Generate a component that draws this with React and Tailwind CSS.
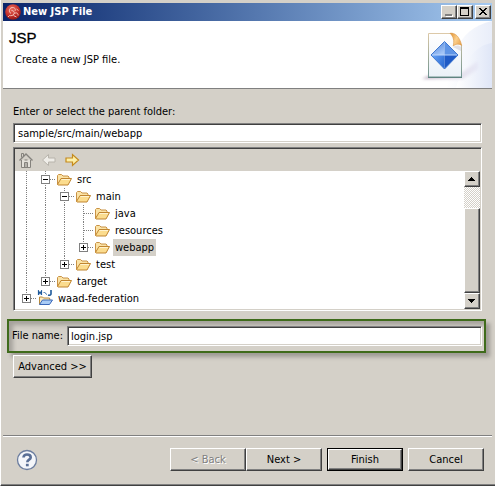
import React from "react";

const RAISED =
  "border border-t-white border-l-white border-r-[#404040] border-b-[#404040] bg-[#d4d0c8] shadow-[inset_-1px_-1px_#808080]";
const SUNKEN =
  "border border-t-[#808080] border-l-[#808080] border-r-white border-b-white shadow-[inset_1px_1px_#404040,inset_-1px_-1px_#d4d0c8]";

/* ---------- title bar ---------- */

function AppIcon() {
  return (
    <svg width="16" height="16" viewBox="0 0 16 16" aria-hidden="true">
      <defs>
        <radialGradient id="ball" cx="0.4" cy="0.3" r="0.75">
          <stop offset="0" stopColor="#ea6a5c" />
          <stop offset="0.6" stopColor="#c4302a" />
          <stop offset="1" stopColor="#8a1212" />
        </radialGradient>
      </defs>
      <circle cx="8" cy="8" r="7.8" fill="url(#ball)" />
      <g fill="none" stroke="#f6cfc6" strokeWidth="0.900">
        <path d="M6 9.500C3.500 8 4 4 7 3.500c2.500-.3 4 1.500 3 3.500" />
        <path d="M6.500 6.500c2 0 3.500 1.500 2.500 3.500-.8 1.500-3 2-4.500 1.500L3 13" />
        <path d="M9.500 9.500c2-1.500 4 0 3.500 2M8.500 11.500l3 1.500M11.500 5l2 1.500" />
      </g>
    </svg>
  );
}

function TitleButton({ label, disabled, children }) {
  return (
    <button
      type="button"
      aria-label={label}
      disabled={disabled}
      className={`flex h-[14px] w-4 items-center justify-center ${RAISED}`}
    >
      <svg width="12" height="10" viewBox="0 0 12 10" shapeRendering="crispEdges" aria-hidden="true">
        {children}
      </svg>
    </button>
  );
}

function TitleBar() {
  return (
    <div className="flex h-[18px] items-center bg-linear-to-r from-[#0a246a] to-[#a6caf0] pr-px pl-[2px]">
      <AppIcon />
      <span className="flex-1 pl-[2px] text-[11px] leading-4 font-bold text-white">New JSP File</span>
      <TitleButton label="Minimize" disabled>
        <path d="M3 8h7v2H3z" fill="#fff" />
        <path d="M2 7h7v2H2z" fill="#808080" />
      </TitleButton>
      <TitleButton label="Maximize">
        <path d="M1 0h9v9H1zM2 2v6h7V2z" fill="#000" fillRule="evenodd" />
      </TitleButton>
      <div className="w-[2px]" />
      <TitleButton label="Close">
        <path
          d="M2 1h2v1h1v1h2V2h1V1h2v1H9v1H8v1H7v1h1v1h1v1h1v1H8V7H7V6H5v1H4v1H2V7h1V6h1V5h1V4H4V3H3V2H2z"
          fill="#000"
        />
      </TitleButton>
    </div>
  );
}

/* ---------- banner ---------- */

function BannerArt() {
  return (
    <svg width="80" height="67" viewBox="0 0 80 67" aria-hidden="true">
      <defs>
        <linearGradient id="sweep" x1="0" y1="0" x2="1" y2="0">
          <stop offset="0" stopColor="#ffffff" />
          <stop offset="1" stopColor="#dfe6f7" />
        </linearGradient>
        <linearGradient id="page" x1="0" y1="0" x2="0" y2="1">
          <stop offset="0" stopColor="#ffffff" />
          <stop offset="1" stopColor="#eaf1f7" />
        </linearGradient>
        <linearGradient id="pageEdge" x1="0" y1="0" x2="0" y2="1">
          <stop offset="0" stopColor="#dcc9a8" />
          <stop offset="1" stopColor="#6f938f" />
        </linearGradient>
        <linearGradient id="fold" x1="0" y1="0.2" x2="1" y2="0.8">
          <stop offset="0" stopColor="#e59a3c" />
          <stop offset="0.5" stopColor="#fbcf8c" />
          <stop offset="1" stopColor="#e9a24a" />
        </linearGradient>
        <linearGradient id="gemTop" x1="0" y1="0" x2="0.6" y2="1">
          <stop offset="0" stopColor="#3f78d6" />
          <stop offset="1" stopColor="#a3c5f6" />
        </linearGradient>
        <linearGradient id="gemBottom" x1="0" y1="0" x2="1" y2="0.6">
          <stop offset="0" stopColor="#6ba6f6" />
          <stop offset="1" stopColor="#2f6fd6" />
        </linearGradient>
        <linearGradient id="shade" x1="0" y1="0" x2="1" y2="0">
          <stop offset="0" stopColor="#a894ac" stopOpacity="0.8" />
          <stop offset="1" stopColor="#d8d3ea" stopOpacity="0.3" />
        </linearGradient>
        <filter id="soft" x="-20%" y="-20%" width="140%" height="140%">
          <feGaussianBlur stdDeviation="1.800" />
        </filter>
      </defs>
      <path d="M80 0C62 4 50 14 44 30L34 67h46z" fill="url(#sweep)" opacity="0.700" />
      <path d="M80 22C66 24 54 34 44 67h36z" fill="url(#sweep)" />
      <path d="M10 58l6-3 33-3 17-12v8L51 58z" fill="url(#shade)" filter="url(#soft)" />
      <path d="M16.500 12.500h24l9 12v31.500h-33z" fill="url(#page)" stroke="url(#pageEdge)" />
      <path d="M16 56.500h34" stroke="#5f8480" />
      <path d="M38 12.300c5-.8 9.500 3 11.700 12.200-2.500-1.800-5.500-1.800-8.500.5 1.300-5 .3-9.500-3.200-12.700z" fill="url(#fold)" stroke="#d99443" strokeWidth="0.600" />
      <path d="M41 26c3-2 6-2 8 0v4z" fill="#c9c6cf" opacity="0.500" />
      <path d="M32.500 20.500V34H19z" fill="url(#gemTop)" />
      <path d="M32.500 20.500V34H46z" fill="#5f95e6" />
      <path d="M19 34h13.500v14z" fill="url(#gemBottom)" />
      <path d="M32.500 34H46L32.500 48z" fill="#1f5bc6" />
      <path d="M32.500 20.500L46 34 32.500 48 19 34z" fill="none" stroke="#3f78d0" />
      <path d="M20 34h25" stroke="#bcd6fc" />
    </svg>
  );
}

/* ---------- tree ---------- */

function Branch({ kind }) {
  const down = kind === "line" || kind === "tee" || kind === "minus";
  const box = kind === "plus" || kind === "minus";
  return (
    <svg width="19" height="17" viewBox="0 0 19 17" shapeRendering="crispEdges" className="shrink-0" aria-hidden="true">
      <g stroke="#808080" strokeDasharray="1 1">
        <path d="M9.500 0V9" />
        {down && <path d="M9.500 8V17" />}
        {kind !== "line" && <path d="M10 8.500H19" />}
      </g>
      {box && (
        <>
          <path d="M5.500 4.500h8v8h-8z" fill="#fff" stroke="#808080" />
          <path d="M7 8.500h5" stroke="#000" />
          {kind === "plus" && <path d="M9.500 6v5" stroke="#000" />}
        </>
      )}
    </svg>
  );
}

function FolderIcon() {
  return (
    <svg width="16" height="16" viewBox="0 0 16 16" className="ml-px shrink-0" aria-hidden="true">
      <path d="M1.500 12.500v-9l1-1h3l1.500 1.500h5l1 1v2" fill="#fbe3a6" stroke="#c99245" />
      <path d="M1.500 12.500L5 6.500h10.500l-3.500 6.500H2z" fill="#fbdc8e" stroke="#c08530" />
      <path d="M5.500 7.500h8.500" stroke="#fff3cf" />
    </svg>
  );
}

function MavenFolderIcon() {
  return (
    <svg width="16" height="17" viewBox="0 0 16 17" className="ml-px shrink-0" aria-hidden="true">
      <path d="M2.500 14.500V7h3l1 1h6l.5 2" fill="#fbe9bd" stroke="#b98a3c" />
      <path d="M2.500 14.500L5.500 10h10l-3 4.500z" fill="#a9cbf5" stroke="#3b68b8" />
      <path d="M1.500 5V1l1.500 2.500L4.500 1v4" fill="none" stroke="#1f5a9c" strokeWidth="1.200" />
      <path d="M6.500 3l1-1 1 1.500 1.500 1" fill="none" stroke="#3f74ad" />
      <path d="M14 0v4c0 1-1 1.500-3 1" fill="none" stroke="#1f5a9c" strokeWidth="1.600" />
    </svg>
  );
}

const ROWS = [
  { name: "src", cells: ["line", "minus"] },
  { name: "main", cells: ["line", "line", "minus"] },
  { name: "java", cells: ["line", "line", "line", "tee"] },
  { name: "resources", cells: ["line", "line", "line", "tee"] },
  { name: "webapp", cells: ["line", "line", "line", "plus"], selected: true },
  { name: "test", cells: ["line", "line", "plus"] },
  { name: "target", cells: ["line", "plus"] },
  { name: "waad-federation", cells: ["plus"], maven: true },
];

function Tree() {
  return (
    <ul role="tree" aria-label="Folders" className="flex-1 overflow-hidden bg-white pb-[2px] pl-[2px]">
      {ROWS.map((row) => (
        <li
          key={row.name}
          role="treeitem"
          aria-level={row.cells.length}
          aria-selected={!!row.selected}
          className="flex h-[17px] items-center"
        >
          {row.cells.map((kind, i) => (
            <Branch key={i} kind={kind} />
          ))}
          {row.maven ? <MavenFolderIcon /> : <FolderIcon />}
          <span className={`ml-[3px] px-[2px] leading-[17px] ${row.selected ? "bg-[#d4d0c8]" : ""}`}>{row.name}</span>
        </li>
      ))}
    </ul>
  );
}

function ScrollBar() {
  return (
    <div className="flex w-4 flex-col bg-[repeating-conic-gradient(#ffffff_0_25%,#d4d0c8_0_50%)] bg-size-[2px_2px]">
      <button type="button" aria-label="Scroll up" className={`flex h-4 items-center justify-center ${RAISED}`}>
        <svg width="8" height="4" viewBox="0 0 8 4" shapeRendering="crispEdges" aria-hidden="true">
          <path d="M3 0h1v1h1v1h1v1h1v1H0V3h1V2h1V1h1z" />
        </svg>
      </button>
      <div className="h-[21px]" />
      <div className={`flex-1 ${RAISED}`} />
      <button type="button" aria-label="Scroll down" className={`flex h-4 items-center justify-center ${RAISED}`}>
        <svg width="8" height="4" viewBox="0 0 8 4" shapeRendering="crispEdges" aria-hidden="true">
          <path d="M0 0h7v1H6v1H5v1H4v1H3V3H2V2H1V1H0z" />
        </svg>
      </button>
    </div>
  );
}

function TreeToolbar() {
  return (
    <div className="flex h-[22px] items-center gap-[7px] bg-[#d4d0c8] pl-[3px]">
      <button type="button" aria-label="Home" disabled>
        <svg width="16" height="16" viewBox="0 0 16 16" fill="none" stroke="#85827d" aria-hidden="true">
          <path d="M3.500 8v7.500h9V8" fill="#e4e1da" />
          <path d="M1.500 8.500L8 2l6.500 6.500" strokeWidth="1.400" />
          <path d="M3.500 5.500v-4h2v2.500M6.500 15.500v-5h3v5M6.500 8h3" />
          <path d="M8 10.500v5" />
        </svg>
      </button>
      <button type="button" aria-label="Back" disabled>
        <svg width="16" height="16" viewBox="0 0 16 16" aria-hidden="true">
          <path d="M1.500 8L7.500 2.500v3.500H14v4H7.500v3.500z" fill="#efede8" stroke="#b8b4ac" />
        </svg>
      </button>
      <button type="button" aria-label="Forward">
        <svg width="16" height="16" viewBox="0 0 16 16" aria-hidden="true">
          <path d="M14.500 8L8.500 2.500v3.500H2v4h6.500v3.500z" fill="#fdf0a8" stroke="#c58a1c" strokeWidth="1.200" />
        </svg>
      </button>
    </div>
  );
}

/* ---------- footer ---------- */

function WizardButton({ children, disabled, primary }) {
  return (
    <button
      type="button"
      disabled={disabled}
      className={`w-[76px] ${primary ? "border border-black" : ""} ${
        disabled ? "text-[#808080] [text-shadow:1px_1px_#fff]" : ""
      }`}
    >
      <span className={`flex items-center justify-center ${primary ? "h-[21px]" : "h-[23px]"} ${RAISED}`}>{children}</span>
    </button>
  );
}

function HelpIcon() {
  return (
    <svg width="22" height="22" viewBox="0 0 22 22" aria-hidden="true">
      <circle cx="11" cy="11" r="9.500" fill="#f4f6fa" stroke="#6b7d9f" strokeWidth="1.300" />
      <path
        d="M7.500 8.500C7.500 6.500 9 5.500 11 5.500s3.700 1 3.700 2.900c0 2.200-3.400 2.300-3.400 4.800"
        fill="none"
        stroke="#5a6f96"
        strokeWidth="2.600"
      />
      <path d="M9.900 14.800h2.800v2.500H9.900z" fill="#5a6f96" />
    </svg>
  );
}

export default function App() {
  return (
    <div className="flex min-h-screen flex-col border-b border-l border-b-[#404040] border-l-white bg-[#d4d0c8] pt-[3px] pr-[3px] pl-[2px] font-['DejaVu_Sans_Condensed','DejaVu_Sans',sans-serif] text-[11px] leading-[14px] text-black shadow-[inset_0_-1px_#808080]">
      <TitleBar />

      <header className="flex h-[68px] justify-between border-b border-[#808080] bg-white">
        <div className="pt-2 pl-[6px]">
          <h1 className="font-['Liberation_Sans',sans-serif] text-[15px] leading-[18px] font-medium [-webkit-text-stroke:0.3px]">
            JSP
          </h1>
          <p className="pt-[6px] pl-[6px]">Create a new JSP file.</p>
        </div>
        <BannerArt />
      </header>

      <main className="flex flex-1 flex-col px-[10px] pt-4">
        <label htmlFor="parent">Enter or select the parent folder:</label>
        <input
          id="parent"
          defaultValue="sample/src/main/webapp"
          className={`mt-1 h-5 bg-white px-1 outline-none ${SUNKEN}`}
        />

        <section className={`mt-1 p-px ${SUNKEN}`}>
          <TreeToolbar />
          <div className="flex">
            <Tree />
            <ScrollBar />
          </div>
        </section>

        <div className="-mr-1 -ml-[6px] mt-2 flex items-center gap-1 border-2 border-[#3f6b1b] py-[5px] pr-[2px] pl-[3px] shadow-[4px_4px_4px_rgba(0,0,0,0.25),inset_4px_4px_4px_rgba(0,0,0,0.22)]">
          <label htmlFor="file">File name:</label>
          <input id="file" defaultValue="login.jsp" className={`h-5 flex-1 bg-white px-[3px] outline-none ${SUNKEN}`} />
        </div>

        <button type="button" className={`mt-[2px] h-[23px] w-[79px] ${RAISED}`}>
          Advanced &gt;&gt;
        </button>
      </main>

      <footer className="border-t border-[#808080] shadow-[inset_0_1px_#fff]">
        <div className="flex items-center pt-3 pr-2 pb-[14px] pl-[13px]">
          <button type="button" aria-label="Help">
            <HelpIcon />
          </button>
          <div className="ml-auto flex">
            <WizardButton disabled>&lt; Back</WizardButton>
            <WizardButton>Next &gt;</WizardButton>
          </div>
          <div className="ml-[5px] flex gap-[5px]">
            <WizardButton primary>Finish</WizardButton>
            <WizardButton>Cancel</WizardButton>
          </div>
        </div>
      </footer>
    </div>
  );
}
